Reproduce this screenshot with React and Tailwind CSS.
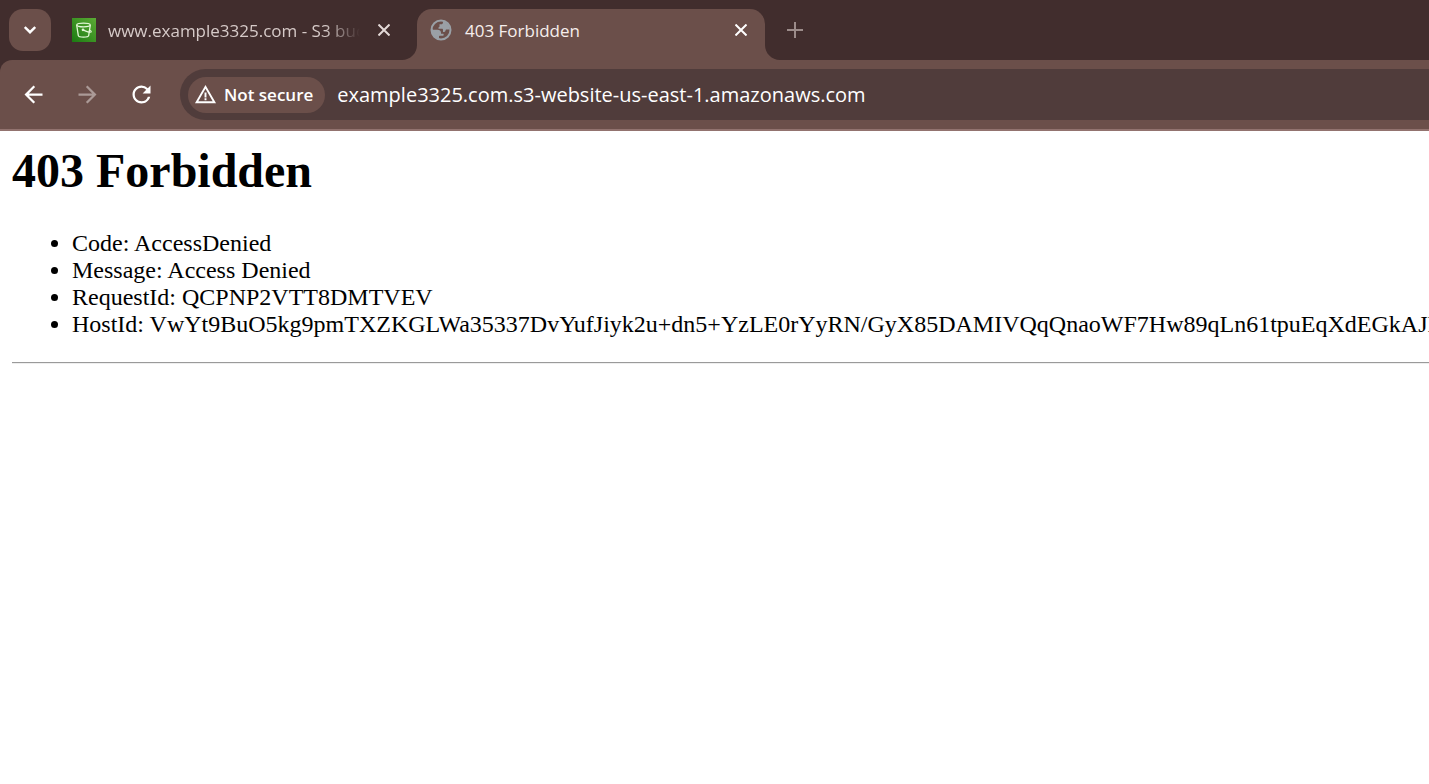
import React, { useState } from 'react';
import { MdArrowBack, MdArrowForward, MdRefresh, MdWarningAmber } from 'react-icons/md';

const details = [
  { label: 'Code', value: 'AccessDenied' },
  { label: 'Message', value: 'Access Denied' },
  { label: 'RequestId', value: 'QCPNP2VTT8DMTVEV' },
  { label: 'HostId', value: 'VwYt9BuO5kg9pmTXZKGLWa35337DvYufJiyk2u+dn5+YzLE0rYyRN/GyX85DAMIVQqQnaoWF7Hw89qLn61tpuEqXdEGkAJN' },
];

function BucketIcon() {
  return (
    <svg viewBox="0 0 24 24" className="w-6 h-6 shrink-0" fill="none" stroke="#e4f8d8" strokeWidth="1.300">
      <defs>
        <linearGradient id="bucket" x1="0" y1="1" x2="1" y2="0">
          <stop offset="0" stopColor="#1b7a12" />
          <stop offset="1" stopColor="#5cab35" />
        </linearGradient>
      </defs>
      <path d="M0 0h24v24H0z" fill="url(#bucket)" stroke="none" />
      <ellipse cx="11.500" cy="7" rx="6.800" ry="1.800" />
      <path d="M4.700 7.200 6.300 17.500c.4 2.200 10 2.200 10.400 0l1.600-10.300" />
      <path d="M11 11.800c2.500 1.600 7.800 3.200 8.300 2 .2-.6-1.100-1.400-2.300-2" />
      <circle cx="11" cy="11.800" r=".7" fill="#e4f8d8" />
    </svg>
  );
}

function GlobeIcon() {
  return (
    <svg viewBox="0 0 22 22" className="w-[22px] h-[22px] shrink-0" fill="#9aa0a6">
      <circle cx="11" cy="11" r="9.500" fill="none" stroke="#9aa0a6" strokeWidth="2" />
      <path d="M13 2v1.500c0 1-.8 1.800-1.800 1.800H9.500v2c0 .6-.5 1-1 1v1.500H12c.7 0 1 .5 1 1v2.200h1.200c.8 0 1.300-.6 1.300-1.400 0-.7.5-1.100 1.200-1.100H20C19.500 6 16.500 3 13 2z" />
      <path d="M1.800 9.500 3 10.700h4.500c2 0 3.500 1.200 3.500 3v1h1.700c.7 0 1 .5 1 1 0 .6-.5 1-1 1H10c-.6 0-1 .4-1 1v2.800C4 20 1 15 1.800 9.500z" />
    </svg>
  );
}

function CloseIcon() {
  return (
    <svg viewBox="0 0 12 12" className="w-3 h-3" fill="none" stroke="currentColor" strokeWidth="2">
      <path d="M.5.5l11 11M11.500.5l-11 11" />
    </svg>
  );
}

// curved feet where the active tab meets the toolbar
function TabFoot({ side }) {
  return (
    <svg viewBox="0 0 15 15" className="w-[15px] h-[15px] shrink-0 self-end" fill="#6b4f4a">
      <path d={side === 'left' ? 'M15 0v15H0C8.300 15 15 8.300 15 0z' : 'M0 0v15h15C6.700 15 0 8.300 0 0z'} />
    </svg>
  );
}

function TabStrip() {
  return (
    <div className="flex h-[60px] pt-[9px] pl-[9px] text-white">
      <button aria-label="Search tabs" className="flex items-center justify-center w-[42px] h-[42px] shrink-0 rounded-[14px] bg-[#6b4f4a]">
        <svg viewBox="0 0 12 8" className="w-3 h-2" fill="none" stroke="currentColor" strokeWidth="2.400">
          <path d="M.8 1L6 6.200 11.200 1" />
        </svg>
      </button>
      <div className="flex items-center h-[42px] w-[351px] shrink-0 pl-[21px] pr-1.5">
        <BucketIcon />
        <span className="ml-3 pt-0.5 flex-1 overflow-hidden whitespace-nowrap text-[17px] leading-6 text-[#d6cac8] [mask-image:linear-gradient(to_right,black_86%,transparent)]">
          www.example3325.com - S3 bucket
        </span>
        <button aria-label="Close tab" className="flex items-center justify-center w-6 h-6 ml-3 text-[#e3d9d7]">
          <CloseIcon />
        </button>
      </div>
      <TabFoot side="left" />
      <div className="flex w-[348px] shrink-0 rounded-t-[15px] bg-[#6b4f4a]">
        <div className="flex items-center w-full h-[42px] pl-[13px] pr-3">
          <GlobeIcon />
          <span className="ml-[13px] pt-0.5 flex-1 text-[17px] leading-6 text-[#f6eeec]">403 Forbidden</span>
          <button aria-label="Close tab" className="flex items-center justify-center w-6 h-6">
            <CloseIcon />
          </button>
        </div>
      </div>
      <TabFoot side="right" />
      <button aria-label="New tab" className="flex items-center justify-center w-[30px] h-[42px] text-[#9c8c8a]">
        <svg viewBox="0 0 16 16" className="w-4 h-4" fill="none" stroke="currentColor" strokeWidth="2">
          <path d="M8 0v16M0 8h16" />
        </svg>
      </button>
    </div>
  );
}

function Toolbar() {
  const [url, setUrl] = useState('example3325.com.s3-website-us-east-1.amazonaws.com');

  return (
    <div className="flex items-center h-[71px] pl-5 rounded-tl-[12px] bg-[#6b4f4a] border-b-2 border-[#92736f] text-white">
      <button aria-label="Back" className="shrink-0">
        <MdArrowBack size={27} />
      </button>
      <button aria-label="Forward" className="shrink-0 ml-[27px] text-[#ab9a97]">
        <MdArrowForward size={27} />
      </button>
      <button aria-label="Reload" className="shrink-0 ml-[27px]">
        <MdRefresh size={27} />
      </button>
      <div className="flex flex-1 items-center h-[51px] ml-[25px] pl-2 rounded-l-full bg-[#503c3b]">
        <button className="flex items-center h-9 shrink-0 pl-1.5 pr-3 rounded-full bg-[#6b4f4a] text-[17px] leading-6 font-semibold">
          <MdWarningAmber size={23} className="mr-[7px]" />
          Not secure
        </button>
        <input
          aria-label="Address"
          className="flex-1 min-w-0 ml-3 bg-transparent text-[20px] leading-7 outline-none"
          value={url}
          onChange={(e) => setUrl(e.target.value)}
        />
      </div>
    </div>
  );
}

export default function App() {
  return (
    <div className="min-h-screen overflow-hidden bg-white">
      <header className="bg-[#412d2d] font-['Open_Sans',sans-serif]">
        <TabStrip />
        <Toolbar />
      </header>
      <main className="pl-3 pt-3 font-['Liberation_Serif',serif] text-2xl leading-[27px] text-black">
        <h1 className="text-5xl leading-[56px] font-bold">403 Forbidden</h1>
        <ul className="mt-[31px] pl-[60px] list-disc whitespace-nowrap">
          {details.map((item) => (
            <li key={item.label}>{item.label}: {item.value}</li>
          ))}
        </ul>
        <hr className="mt-6 h-0.5 border-t border-b border-t-[#9a9a9a] border-b-[#eeeeee]" />
      </main>
    </div>
  );
}
